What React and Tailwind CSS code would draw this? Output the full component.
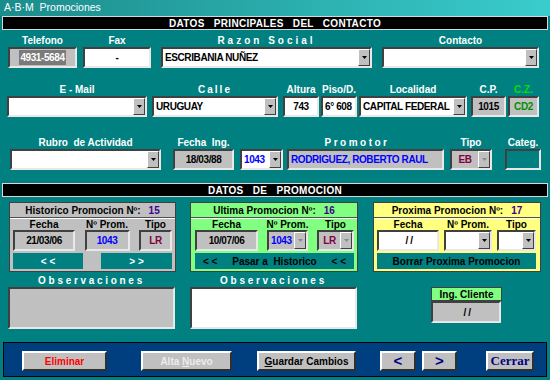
import React from 'react';

// windows-ish bevels
const sunk = 'border-2 border-t-[#404040] border-l-[#404040] border-b-[#e8e8e8] border-r-[#e8e8e8]';
const raised = 'border-2 border-t-white border-l-white border-b-[#303030] border-r-[#303030]';

const Drop = ({ off }) => (
  <div className="flex h-full w-[12px] shrink-0 items-center justify-center border border-t-white border-l-white border-b-[#404040] border-r-[#404040] bg-[#c0c0c0]">
    <svg width="5" height="3" viewBox="0 0 5 3">
      <path d="M0 0h5L2.5 3z" fill={off ? '#8a8a8a' : '#000'} />
    </svg>
  </div>
);

const Box = ({ w, bg = 'bg-white', align = 'justify-start', text = 'text-black', h = 'h-[21px]', drop, off, children }) => (
  <div className={`flex items-stretch ${h} ${w} ${bg} ${sunk}`}>
    <div className={`flex min-w-0 flex-1 items-center overflow-hidden whitespace-pre px-[2px] text-[10px] font-bold tracking-[-0.4px] ${align} ${text}`}>
      {children}
    </div>
    {drop && <Drop off={off} />}
  </div>
);

const Field = ({ label, lc = 'text-white', className = '', children }) => (
  <div className={`flex flex-col items-center ${className}`}>
    <div className={`h-[13px] whitespace-pre text-[10px] font-bold leading-[13px] ${lc}`}>{label}</div>
    {children}
  </div>
);

const Header = ({ children, className = '' }) => (
  <div className={`mx-[2px] flex h-[14px] items-center justify-center border border-[#d8d8d8] bg-black whitespace-pre text-[10px] font-bold tracking-[0.3px] text-white ${className}`}>
    {children}
  </div>
);

const PanelField = ({ label, children }) => (
  <div className="flex flex-col items-center">
    <div className="h-[11px] text-[10px] font-bold leading-[11px] text-black">{label}</div>
    {children}
  </div>
);

const Panel = ({ bg, title, num, w, pad, children, footer }) => (
  <div className={`flex h-[70px] flex-col border border-[#404040] ${bg} ${w}`}>
    <div className="flex h-[14px] items-center justify-center text-[10px] font-bold text-black">
      {title}
      <span className="ml-[8px] text-[#400090]">{num}</span>
    </div>
    <div className="h-[2px] border-t border-t-[#505050] border-b border-b-white" />
    <div className={`flex justify-between ${pad}`}>{children}</div>
    <div className={`mt-[2px] flex h-[16px] ${pad}`}>{footer}</div>
  </div>
);

const Btn = ({ w, className = '', children }) => (
  <div className={`flex h-[20px] items-center justify-center whitespace-nowrap bg-[#c0c0c0] ${raised} ${w} ${className}`}>{children}</div>
);

export default function App() {
  return (
    <div className="h-[380px] w-[550px] overflow-hidden bg-[#008080] font-['Liberation_Sans',Arial,sans-serif]">
      {/* title bar */}
      <div className="flex h-[16px] items-center bg-gradient-to-r from-[#1b8c8c] to-[#3acccc] pl-[4px] text-[10.5px] whitespace-pre text-white">
        A·B·M  Promociones
      </div>

      <Header>{'DATOS   PRINCIPALES   DEL   CONTACTO'}</Header>

      {/* row 1 */}
      <div className="mt-[4px] flex pl-[8px]">
        <Field label="Telefono">
          <Box w="w-[69px]" bg="bg-[#c0c0c0]" align="justify-center">
            <span className="bg-[#7a7a7a] px-[1px] text-white">4931-5684</span>
          </Box>
        </Field>
        <Field label="Fax" className="ml-[6px]">
          <Box w="w-[68px]" align="justify-center">-</Box>
        </Field>
        <Field label="Razon Social" lc="text-white tracking-[3px]" className="ml-[10px]">
          <Box w="w-[211px]" drop>ESCRIBANIA NUÑEZ</Box>
        </Field>
        <Field label="Contacto" className="ml-[10px]">
          <Box w="w-[157px]" drop />
        </Field>
      </div>

      {/* row 2 */}
      <div className="mt-[15px] flex pl-[7px]">
        <Field label="E - Mail">
          <Box w="w-[140px]" drop />
        </Field>
        <Field label="Calle" lc="text-white tracking-[2px]" className="ml-[5px]">
          <Box w="w-[126px]" drop>URUGUAY</Box>
        </Field>
        <Field label="Altura" className="ml-[5px]">
          <Box w="w-[36px]" align="justify-center">743</Box>
        </Field>
        <Field label="Piso/D." className="ml-[2px]">
          <Box w="w-[36px]">6° 608</Box>
        </Field>
        <Field label="Localidad" className="ml-[2px]">
          <Box w="w-[108px]" drop>CAPITAL FEDERAL</Box>
        </Field>
        <Field label="C.P." className="ml-[4px]">
          <Box w="w-[35px]" bg="bg-[#c0c0c0]" align="justify-center">1015</Box>
        </Field>
        <Field label="C.Z." lc="text-[#00e000]" className="ml-[2px]">
          <Box w="w-[31px]" bg="bg-[#c0c0c0]" align="justify-center" text="text-[#009000]">CD2</Box>
        </Field>
      </div>

      {/* row 3 */}
      <div className="mt-[19px] flex pl-[10px]">
        <Field label="Rubro  de Actividad">
          <Box w="w-[151px]" drop />
        </Field>
        <Field label="Fecha  Ing." className="ml-[12px]">
          <Box w="w-[61px]" bg="bg-[#c0c0c0]" align="justify-center">18/03/88</Box>
        </Field>
        <div className="ml-[6px] flex flex-col">
          <div className="h-[13px] w-full pl-[30px] text-center text-[10px] font-bold leading-[13px] tracking-[2.5px] text-white">Promotor</div>
          <div className="flex">
            <Box w="w-[43px]" text="text-[#0000ff]" drop>1043</Box>
            <Box w="w-[157px] ml-[4px]" bg="bg-[#c0c0c0]" text="text-[#0000ff]">RODRIGUEZ, ROBERTO RAUL</Box>
          </div>
        </div>
        <Field label="Tipo" className="ml-[6px]">
          <Box w="w-[42px]" bg="bg-[#c0c0c0]" align="justify-center" text="text-[#800040]" drop off>EB</Box>
        </Field>
        <Field label="Categ." className="ml-[13px]">
          <Box w="w-[36px]" bg="bg-transparent" />
        </Field>
      </div>

      <Header className="mt-[13px]">{'DATOS   DE   PROMOCION'}</Header>

      {/* promo panels */}
      <div className="mt-[5px] flex pl-[9px]">
        <Panel
          bg="bg-[#c0c0c0]"
          w="w-[167px]"
          pad="px-[3px]"
          title="Historico Promocion Nº:"
          num="15"
          footer={
            <div className="flex w-full justify-between text-[10px] font-bold text-white">
              <div className="flex w-[70px] items-center justify-center bg-[#008080]">{'< <'}</div>
              <div className="flex w-[71px] items-center justify-center bg-[#008080]">{'> >'}</div>
            </div>
          }
        >
          <PanelField label="Fecha">
            <Box w="w-[62px]" bg="bg-[#c0c0c0]" align="justify-center">21/03/06</Box>
          </PanelField>
          <PanelField label="Nº Prom.">
            <Box w="w-[45px]" bg="bg-[#c0c0c0]" align="justify-center" text="text-[#0000ff]">1043</Box>
          </PanelField>
          <PanelField label="Tipo">
            <Box w="w-[33px]" bg="bg-[#c0c0c0]" align="justify-center" text="text-[#800040]">LR</Box>
          </PanelField>
        </Panel>

        <div className="ml-[14px]">
          <Panel
            bg="bg-[#80ff80]"
            w="w-[168px]"
            pad="pl-[4px] pr-[3px]"
            title="Ultima Promocion Nº:"
            num="16"
            footer={
              <div className="flex w-full items-center justify-between whitespace-pre bg-[#008080] px-[8px] text-[10px] font-bold text-black">
                <span>{'< <'}</span>
                <span>{'Pasar a  Historico'}</span>
                <span>{'< <'}</span>
              </div>
            }
          >
            <PanelField label="Fecha">
              <Box w="w-[63px]" bg="bg-[#c0c0c0]" align="justify-center">10/07/06</Box>
            </PanelField>
            <PanelField label="Nº Prom.">
              <Box w="w-[41px]" bg="bg-[#c0c0c0]" text="text-[#0000ff]" drop off>1043</Box>
            </PanelField>
            <PanelField label="Tipo">
              <Box w="w-[37px]" bg="bg-[#c0c0c0]" align="justify-center" text="text-[#800040]" drop off>LR</Box>
            </PanelField>
          </Panel>
        </div>

        <div className="ml-[15px]">
          <Panel
            bg="bg-[#ffff80]"
            w="w-[168px]"
            pad="pl-[3px] pr-[4px]"
            title="Proxima Promocion Nº:"
            num="17"
            footer={
              <div className="flex w-full items-center justify-center bg-[#008080] text-[10px] font-bold text-black">
                Borrar Proxima Promocion
              </div>
            }
          >
            <PanelField label="Fecha">
              <Box w="w-[62px]" align="justify-center">{' / /'}</Box>
            </PanelField>
            <PanelField label="Nº Prom.">
              <Box w="w-[48px]" drop />
            </PanelField>
            <PanelField label="Tipo">
              <Box w="w-[39px]" drop />
            </PanelField>
          </Panel>
        </div>
      </div>

      {/* observaciones */}
      <div className="mt-[3px] flex pl-[8px]">
        <div className="flex flex-col items-center">
          <div className="h-[12px] text-[10px] font-bold leading-[12px] tracking-[2.7px] text-white">Observaciones</div>
          <Box w="w-[167px]" h="h-[42px]" bg="bg-[#c0c0c0]" />
        </div>
        <div className="ml-[15px] flex flex-col items-center">
          <div className="h-[12px] text-[10px] font-bold leading-[12px] tracking-[2.7px] text-white">Observaciones</div>
          <Box w="w-[167px]" h="h-[42px]" />
        </div>
        <div className="ml-[74px] flex flex-col pt-[12px]">
          <div className="flex h-[14px] w-[71px] items-center justify-center border border-[#404040] bg-[#80ff80] text-[10px] font-bold text-black">
            Ing. Cliente
          </div>
          <Box w="w-[70px]" h="h-[22px]" bg="bg-[#c0c0c0]" align="justify-center">{' / /'}</Box>
        </div>
      </div>

      {/* button bar */}
      <div className="mx-[3px] mt-[13px] flex h-[35px] items-start border border-black bg-[#003f7f] pl-[18px] pt-[8px] text-[10px] font-bold">
        <Btn w="w-[85px]" className="text-[#ff0000]">Eliminar</Btn>
        <Btn w="w-[91px]" className="ml-[34px] text-[#ececec]">
          <span>
            Alta <span className="underline">N</span>uevo
          </span>
        </Btn>
        <Btn w="w-[99px]" className="ml-[25px] text-black">
          <span>
            <span className="underline">G</span>uardar Cambios
          </span>
        </Btn>
        <Btn w="w-[36px]" className="ml-[24px] text-[15px] text-[#000080]">{'<'}</Btn>
        <Btn w="w-[35px]" className="ml-[6px] text-[15px] text-[#000080]">{'>'}</Btn>
        <Btn w="w-[48px]" className="ml-[29px] font-['Liberation_Serif',serif] text-[13px] text-[#000080]">Cerrar</Btn>
      </div>
    </div>
  );
}
